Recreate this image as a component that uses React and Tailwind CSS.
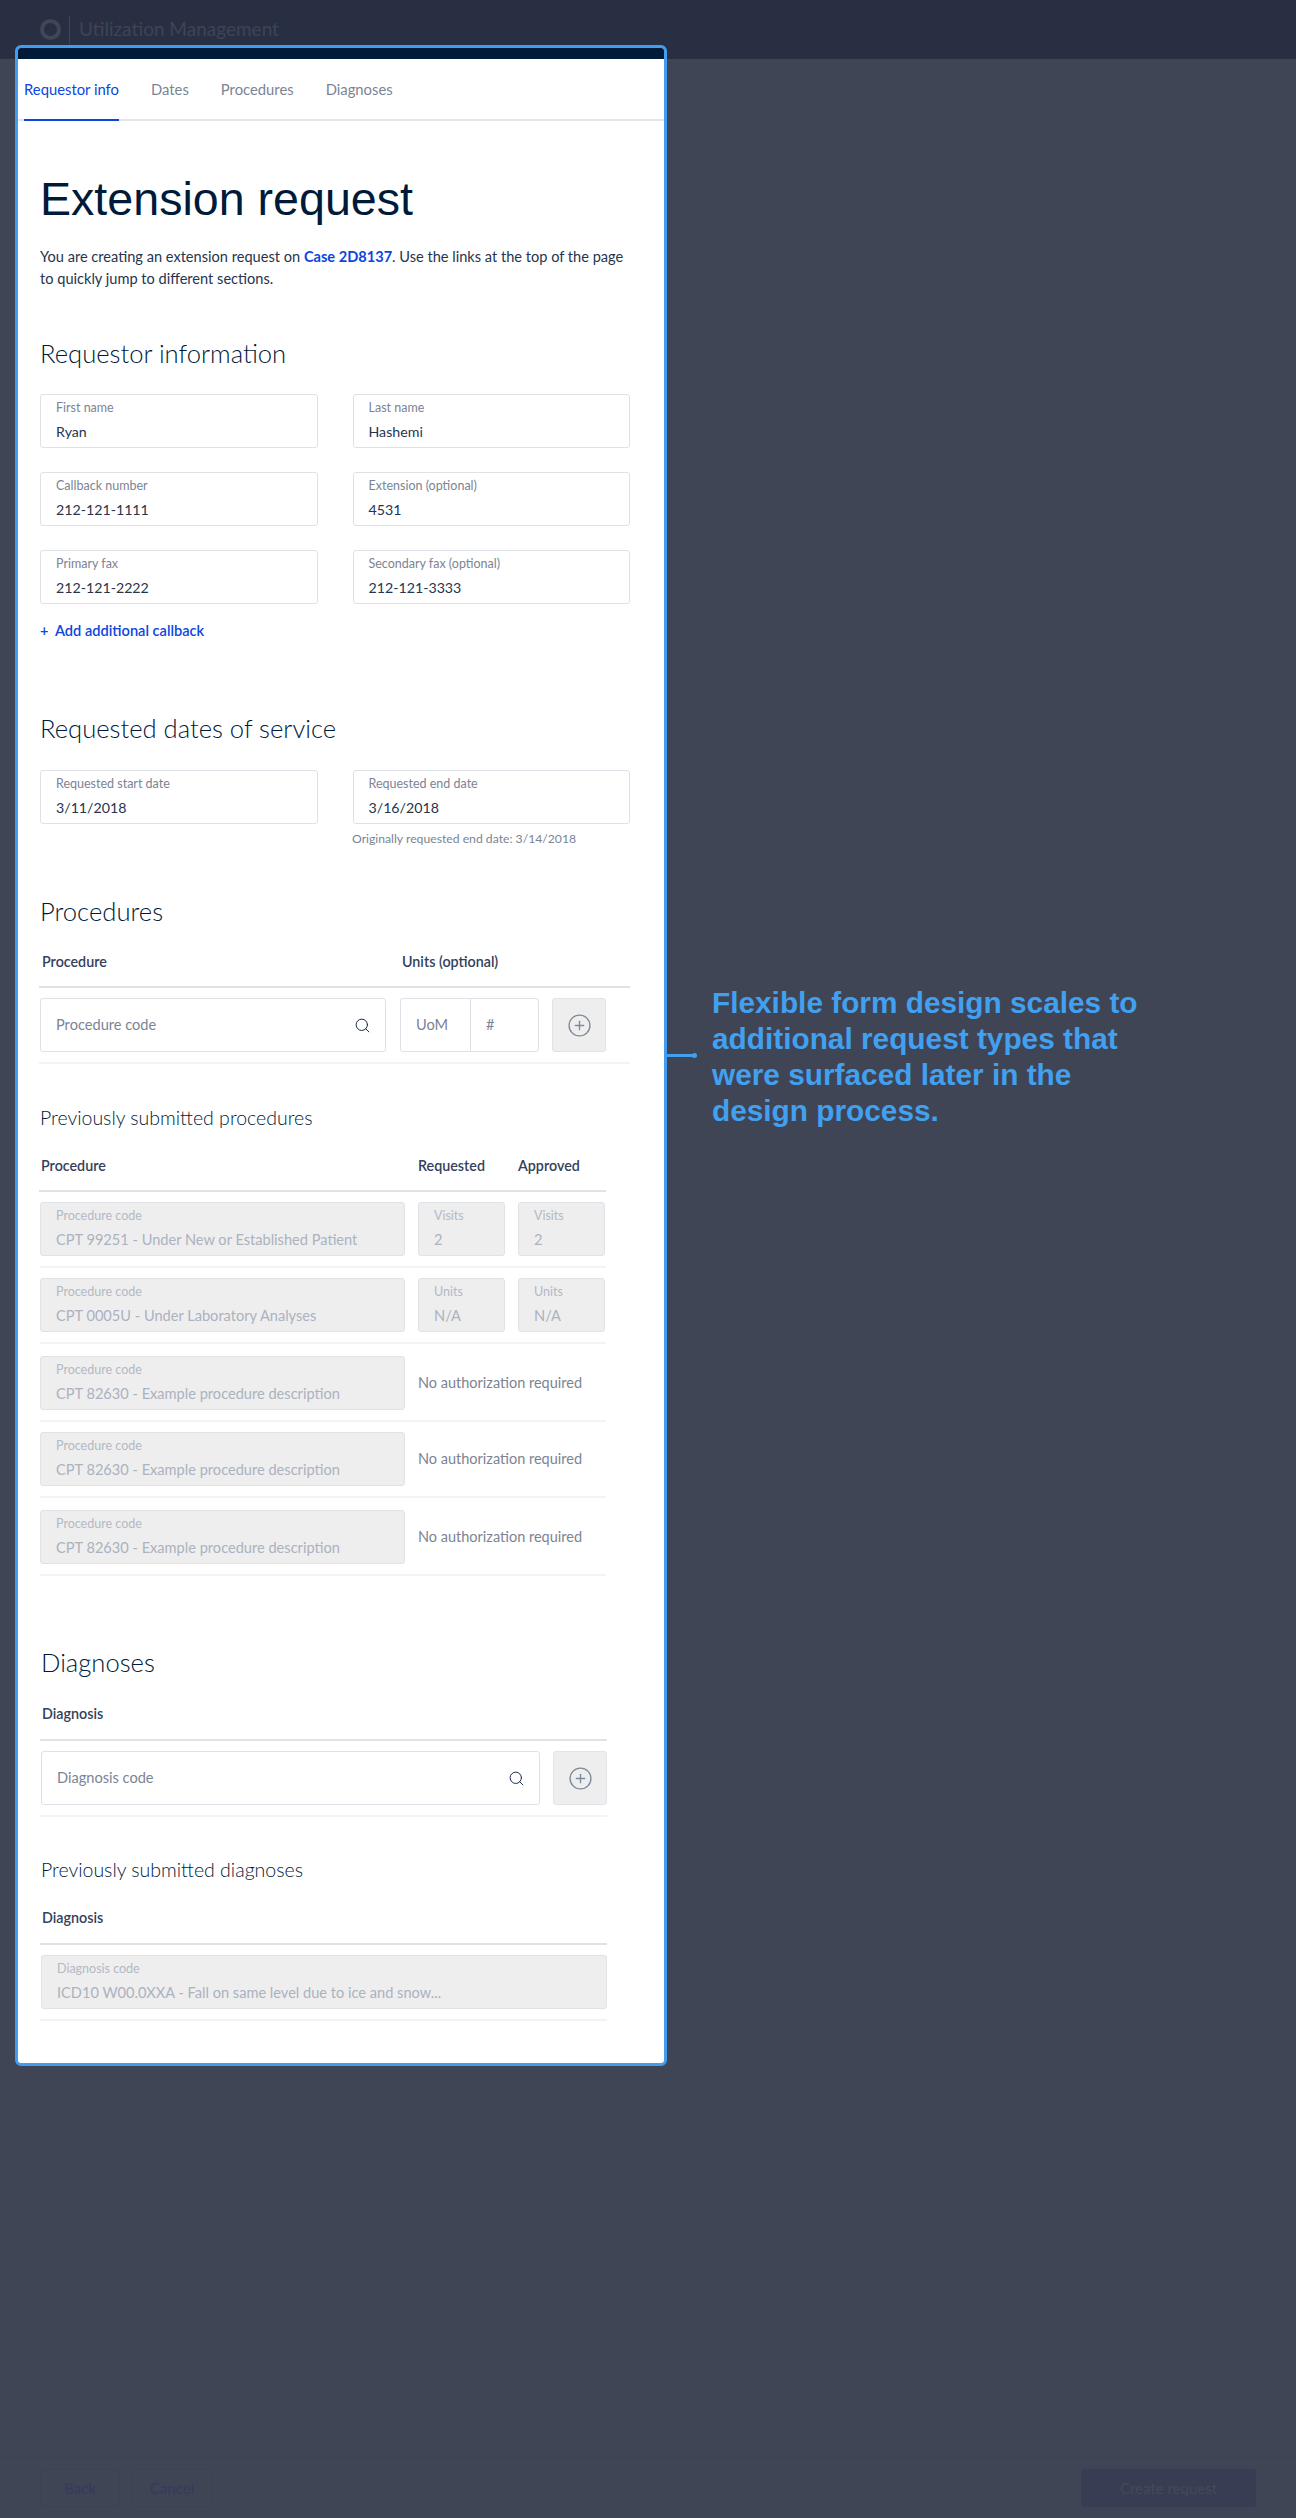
import { Search, CirclePlus } from 'lucide-react'

const sans = 'font-["Lato",sans-serif]'

function Field({ label, value, className = '' }) {
    return (
        <div className={`h-[54px] rounded-[3px] border border-[#dfe1e8] bg-white pl-[15px] ${className}`}>
            <div className="pt-[5px] text-[12.5px] leading-[16px] text-[#7b8494]">{label}</div>
            <div className="mt-[7px] text-[14.2px] leading-[18px] text-[#26344f]">{value}</div>
        </div>
    )
}

function LockedField({ label, value, className = '' }) {
    return (
        <div className={`h-[54px] rounded-[3px] border border-[#e0e2e8] bg-[#eeeeee] pl-[15px] ${className}`}>
            <div className="pt-[5px] text-[12.5px] leading-[16px] text-[#b3b9c5]">{label}</div>
            <div className="mt-[7px] text-[14.6px] leading-[18px] text-[#abb2c0]">{value}</div>
        </div>
    )
}

function AddButton() {
    return (
        <div className="flex h-[54px] w-[54px] shrink-0 items-center justify-center rounded-[3px] border border-[#e2e3e8] bg-[#eeeeee]">
            <CirclePlus size={25} strokeWidth={1.3} className="text-[#7f8a9c]" />
        </div>
    )
}

function ColLabel({ children, className = '' }) {
    return <div className={`text-[14.3px] font-semibold leading-[18px] text-[#33415c] ${className}`}>{children}</div>
}

const PROCEDURE_ROWS = [
    { code: 'CPT 99251 - Under New or Established Patient', unit: 'Visits', amount: '2', mb: 'mb-[10px]' },
    { code: 'CPT 0005U - Under Laboratory Analyses', unit: 'Units', amount: 'N/A', mb: 'mb-[12px]' },
    { code: 'CPT 82630 - Example procedure description', mb: 'mb-[10px]' },
    { code: 'CPT 82630 - Example procedure description', mb: 'mb-[12px]' },
    { code: 'CPT 82630 - Example procedure description', mb: '' },
]

export default function App() {
    return (
        <div className={`relative flex h-[2518px] flex-col bg-[#3f4554] ${sans}`}>
            {/* dimmed page behind the panel */}
            <header className="flex h-[59px] shrink-0 items-center bg-[#292f42] pl-[40px]">
                <div className="h-[21px] w-[21px] rounded-full border-[4px] border-[#3f4656]" />
                <div className="ml-[8px] h-[28px] w-px bg-[#3f4656]" />
                <div className="ml-[9px] text-[19px] text-[#3d4455]">Utilization Management</div>
            </header>
            <div className="h-[62px] shrink-0 border-b border-[#3d4352]" />
            <div className="flex-1" />
            <footer className="flex h-[61px] shrink-0 items-center justify-between border-t border-[#3c4251] px-[40px]">
                <div className="flex gap-[12px]">
                    <div className="flex h-[38px] w-[80px] items-center justify-center rounded-[3px] border border-[#3c4252] text-[15px] text-[#333c5e]">Back</div>
                    <div className="flex h-[38px] w-[80px] items-center justify-center rounded-[3px] border border-[#3c4252] text-[15px] text-[#333c5e]">Cancel</div>
                </div>
                <div className="flex h-[38px] w-[175px] items-center justify-center rounded-[4px] bg-[#373d52] text-[15px] text-[#444a5a]">Create request</div>
            </footer>

            {/* highlighted panel */}
            <div className="absolute left-[15px] top-[45px] h-[2021px] w-[652px] overflow-hidden rounded-[6px] border-[3px] border-[#429cf0] bg-white">
                <div className="h-[11px] bg-[#001a3a]" />
                <nav className="flex h-[62px] items-start gap-[32px] border-b-2 border-[#e5e5e5] pl-[6px] text-[14.8px] text-[#7b8494]">
                    <div className="-mb-[2px] flex h-[62px] w-[95px] items-center justify-center whitespace-nowrap border-b-2 border-[#0b46e0] text-[#0b46e0]">Requestor info</div>
                    <div className="flex h-[60px] items-center">Dates</div>
                    <div className="flex h-[60px] items-center">Procedures</div>
                    <div className="flex h-[60px] items-center">Diagnoses</div>
                </nav>

                <div className="pl-[22px] text-[#26344f]">
                    <h1 className="mt-[50px] font-['Liberation_Sans',sans-serif] text-[46.6px] leading-[56px] text-[#001a3a]">Extension request</h1>
                    <p className="mt-[19px] w-[590px] text-[14.6px] leading-[22px]">
                        You are creating an extension request on <span className="font-bold text-[#0b46e0]">Case 2D8137</span>. Use the links at the top of the page to quickly jump to different sections.
                    </p>

                    <h2 className="mt-[47px] text-[25.6px] font-light leading-[32px] text-[#001a3a]">Requestor information</h2>
                    <div className="mt-[25px] grid w-[590px] grid-cols-2 gap-x-[35px] gap-y-[24px]">
                        <Field label="First name" value="Ryan" />
                        <Field label="Last name" value="Hashemi" />
                        <Field label="Callback number" value="212-121-1111" />
                        <Field label="Extension (optional)" value="4531" />
                        <Field label="Primary fax" value="212-121-2222" />
                        <Field label="Secondary fax (optional)" value="212-121-3333" />
                    </div>
                    <div className="mt-[17px] flex text-[14.6px] font-semibold leading-[20px] text-[#0b46e0]">
                        <span className="w-[15px]">+</span>
                        <span>Add additional callback</span>
                    </div>

                    <h2 className="mt-[71px] text-[25.6px] font-light leading-[32px] text-[#001a3a]">Requested dates of service</h2>
                    <div className="mt-[26px] grid w-[590px] grid-cols-2 gap-x-[35px]">
                        <Field label="Requested start date" value="3/11/2018" />
                        <Field label="Requested end date" value="3/16/2018" />
                    </div>
                    <div className="ml-[312px] mt-[7px] text-[12.2px] leading-[16px] text-[#7b8494]">Originally requested end date: 3/14/2018</div>

                    <h2 className="mt-[48px] text-[25.6px] font-light leading-[32px] text-[#001a3a]">Procedures</h2>
                    <div className="-ml-px mt-[26px] flex w-[591px] border-b-2 border-[#dfe2e6] pb-[15px] pl-[3px]">
                        <ColLabel className="w-[360px]">Procedure</ColLabel>
                        <ColLabel>Units (optional)</ColLabel>
                    </div>
                    <div className="-ml-px mt-[10px] flex w-[591px] border-b-2 border-[#f2f3f4] pb-[10px] pl-px">
                        <div className="flex h-[54px] w-[346px] items-center justify-between rounded-[3px] border border-[#dfe1e8] pl-[15px] pr-[14px] text-[14.6px] text-[#7b8494]">
                            Procedure code
                            <Search size={17} strokeWidth={1.4} className="text-[#1b2a47]" />
                        </div>
                        <div className="ml-[14px] flex h-[54px] w-[139px] rounded-[3px] border border-[#dfe1e8] text-[14.6px] text-[#7b8494]">
                            <div className="flex w-[70px] items-center border-r border-[#dfe1e8] pl-[15px]">UoM</div>
                            <div className="flex items-center pl-[15px]">#</div>
                        </div>
                        <div className="ml-[13px]"><AddButton /></div>
                    </div>

                    <h3 className="mt-[40px] text-[19.5px] font-light leading-[28px] text-[#001a3a]">Previously submitted procedures</h3>
                    <div className="-ml-px mt-[25px] flex w-[567px] border-b-2 border-[#dfe2e6] pb-[15px] pl-[2px]">
                        <ColLabel className="w-[377px]">Procedure</ColLabel>
                        <ColLabel className="w-[100px]">Requested</ColLabel>
                        <ColLabel>Approved</ColLabel>
                    </div>
                    <div className="mt-[10px] w-[566px]">
                        {PROCEDURE_ROWS.map((row, i) => (
                            <div key={i} className={`flex items-center border-b-2 border-[#f2f3f4] pb-[10px] ${row.mb}`}>
                                <LockedField label="Procedure code" value={row.code} className="w-[365px] shrink-0" />
                                {row.unit ? (
                                    <>
                                        <LockedField label={row.unit} value={row.amount} className="ml-[13px] w-[87px]" />
                                        <LockedField label={row.unit} value={row.amount} className="ml-[13px] w-[87px]" />
                                    </>
                                ) : (
                                    <div className="ml-[13px] text-[14.5px] text-[#7b8494]">No authorization required</div>
                                )}
                            </div>
                        ))}
                    </div>

                    <h2 className="mt-[70px] pl-px text-[25.6px] font-light leading-[32px] text-[#001a3a]">Diagnoses</h2>
                    <div className="mt-[27px] w-[567px] border-b-2 border-[#dfe2e6] pb-[16px] pl-[2px]">
                        <ColLabel>Diagnosis</ColLabel>
                    </div>
                    <div className="mt-[10px] flex w-[567px] justify-between border-b-2 border-[#f2f3f4] pb-[10px] pl-px">
                        <div className="flex h-[54px] w-[499px] items-center justify-between rounded-[3px] border border-[#dfe1e8] pl-[15px] pr-[14px] text-[14.6px] text-[#7b8494]">
                            Diagnosis code
                            <Search size={17} strokeWidth={1.4} className="text-[#1b2a47]" />
                        </div>
                        <AddButton />
                    </div>

                    <h3 className="mt-[39px] pl-px text-[19.5px] font-light leading-[28px] text-[#001a3a]">Previously submitted diagnoses</h3>
                    <div className="mt-[25px] w-[567px] border-b-2 border-[#dfe2e6] pb-[16px] pl-[2px]">
                        <ColLabel>Diagnosis</ColLabel>
                    </div>
                    <div className="mt-[10px] w-[567px] border-b-2 border-[#f2f3f4] pb-[10px] pl-px">
                        <LockedField label="Diagnosis code" value="ICD10 W00.0XXA - Fall on same level due to ice and snow..." />
                    </div>
                </div>
            </div>

            {/* annotation */}
            <div className="absolute left-[667px] top-[1053px] flex items-center">
                <div className="h-[3px] w-[26px] bg-[#42a0f0]" />
                <div className="-ml-px h-[5px] w-[5px] rounded-full bg-[#42a0f0]" />
            </div>
            <div className="absolute left-[712px] top-[985px] w-[440px] font-['Liberation_Sans',sans-serif] text-[29.8px] font-bold leading-[36px] text-[#42a0f0]">
                Flexible form design scales to additional request types that were surfaced later in the design process.
            </div>
        </div>
    )
}
